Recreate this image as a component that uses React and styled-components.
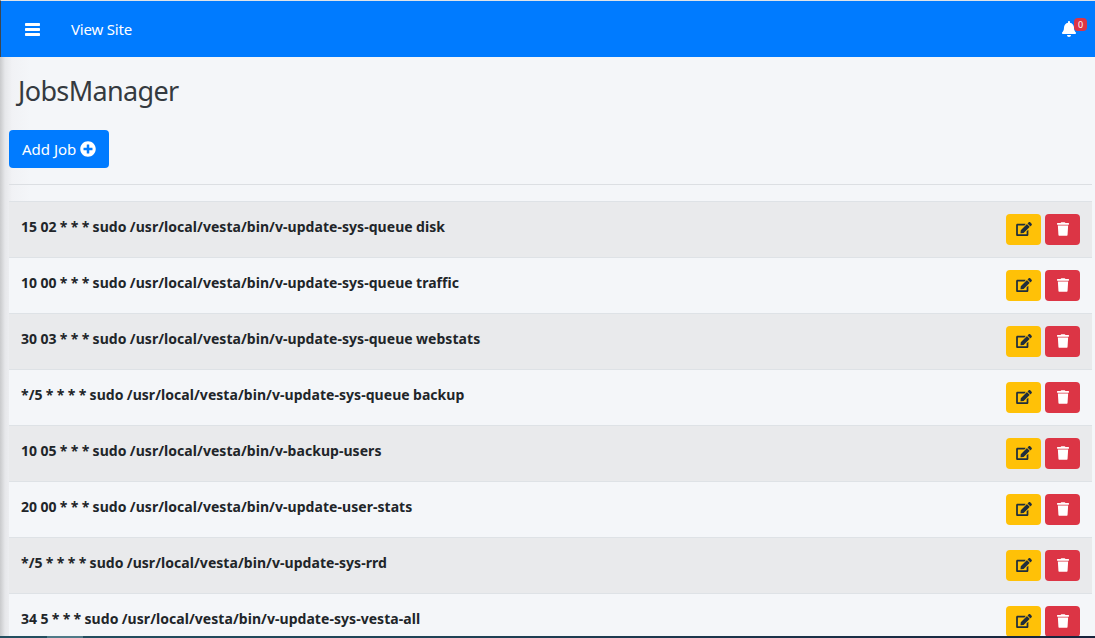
import React from "react";
import styled, { createGlobalStyle } from "styled-components";

const FONT = '"Noto Sans", "Open Sans", sans-serif';

const jobs = [
  "15 02 * * * sudo /usr/local/vesta/bin/v-update-sys-queue disk",
  "10 00 * * * sudo /usr/local/vesta/bin/v-update-sys-queue traffic",
  "30 03 * * * sudo /usr/local/vesta/bin/v-update-sys-queue webstats",
  "*/5 * * * * sudo /usr/local/vesta/bin/v-update-sys-queue backup",
  "10 05 * * * sudo /usr/local/vesta/bin/v-backup-users",
  "20 00 * * * sudo /usr/local/vesta/bin/v-update-user-stats",
  "*/5 * * * * sudo /usr/local/vesta/bin/v-update-sys-rrd",
  "34 5 * * * sudo /usr/local/vesta/bin/v-update-sys-vesta-all",
];

const GlobalStyle = createGlobalStyle`
  html, body {
    margin: 0;
    height: 100%;
    overflow: hidden;
    background: #f4f6f9;
  }
  * {
    box-sizing: border-box;
  }
`;

const Page = styled.div`
  height: 638px;
  overflow: hidden;
  font-family: ${FONT};
  color: #212529;
  display: flex;
  flex-direction: column;
  background: linear-gradient(90deg, #c9cacc 0, #e6e7ea 5px, #f1f2f5 12px, #f4f6f9 30px);
`;

const Navbar = styled.nav`
  height: 57px;
  flex: none;
  background: #007bff;
  border-top: 1px solid #dfe3e8;
  border-left: 1px solid #3c4650;
  display: flex;
  align-items: center;
  padding: 0 19px 0 24px;
  color: #fff;
`;

const MenuButton = styled.span`
  display: flex;
  width: 15px;
  margin-right: 31px;
`;

const NavLink = styled.span`
  font-size: 15px;
  letter-spacing: -0.2px;
`;

const Bell = styled.span`
  position: relative;
  display: flex;
  margin-left: auto;
`;

const Badge = styled.span`
  position: absolute;
  top: -3px;
  right: -11px;
  width: 13px;
  height: 13px;
  border-radius: 4px;
  background: #dc3545;
  font-size: 9px;
  line-height: 13px;
  text-align: center;
`;

const Content = styled.main`
  flex: 1;
  min-height: 0;
  overflow: hidden;
  padding: 0 3px 0 9px;
`;

const Title = styled.h1`
  margin: 18px 0 23px 9px;
  font-size: 27px;
  line-height: 32px;
  font-weight: 400;
  color: #343a40;
  letter-spacing: -0.65px;
`;

const AddButton = styled.button`
  display: flex;
  align-items: center;
  gap: 4px;
  height: 38px;
  width: 100px;
  padding: 0 0 0 13px;
  border: 0;
  border-radius: 4px;
  background: #007bff;
  color: #fff;
  font: 400 15px ${FONT};
  letter-spacing: 0;
`;

const Divider = styled.hr`
  margin: 16px 0;
  border: 0;
  border-top: 1px solid #dcdfe3;
`;

const Row = styled.div`
  height: 56px;
  display: flex;
  align-items: center;
  padding: 0 12px;
  border-top: 1px solid #dee2e6;
  background: ${(p) => (p.$striped ? "#e9eaec" : "#f4f6f9")};
`;

const Command = styled.span`
  font-size: 14px;
  line-height: 20px;
  font-weight: 700;
  letter-spacing: 0.05px;
  word-spacing: -0.4px;
  margin-top: -5px;
`;

const Actions = styled.div`
  display: flex;
  gap: 4px;
  margin-left: auto;
`;

const IconButton = styled.span`
  width: 35px;
  height: 31px;
  padding-bottom: 2px;
  border-radius: 4px;
  display: flex;
  align-items: center;
  justify-content: center;
  background: ${(p) => (p.$danger ? "#dc3545" : "#ffc107")};
  color: ${(p) => (p.$danger ? "#fff" : "#1f2d3d")};
`;

const Taskbar = styled.div`
  flex: none;
  height: 2px;
  display: flex;
  background: linear-gradient(90deg, #234f60 0, #1f4256 40%, #17233d 100%);
`;

const TaskbarItem = styled.span`
  width: 36px;
  margin-left: 47px;
  background: #4f7a88;
`;

const BarsIcon = () => (
  <svg width="15" height="13" viewBox="0 0 15 13" fill="currentColor">
    <rect y="0" width="15" height="3" rx="0.7" />
    <rect y="5" width="15" height="3" rx="0.7" />
    <rect y="10" width="15" height="3" rx="0.7" />
  </svg>
);

const BellIcon = () => (
  <svg width="14" height="16" viewBox="0 0 448 512" fill="currentColor">
    <path d="M224 512c35.32 0 63.97-28.65 63.97-64H160.03c0 35.35 28.65 64 63.97 64zm215.39-149.71c-19.32-20.76-55.47-51.99-55.47-154.29 0-77.7-54.48-139.9-127.94-155.16V32c0-17.67-14.32-32-31.98-32s-31.98 14.33-31.98 32v20.84C118.56 68.1 64.08 130.3 64.08 208c0 102.3-36.15 133.53-55.47 154.29-6 6.45-8.66 14.16-8.61 21.71.11 16.4 12.98 32 32.1 32h383.8c19.12 0 32-15.6 32.1-32 .05-7.55-2.61-15.27-8.61-21.71z" />
  </svg>
);

const PlusIcon = () => (
  <svg width="16" height="16" viewBox="0 0 512 512" fill="currentColor">
    <path d="M256 8C119 8 8 119 8 256s111 248 248 248 248-111 248-248S393 8 256 8zm144 276c0 6.600-5.400 12-12 12h-92v92c0 6.600-5.400 12-12 12h-56c-6.600 0-12-5.400-12-12v-92h-92c-6.600 0-12-5.400-12-12v-56c0-6.600 5.400-12 12-12h92v-92c0-6.600 5.400-12 12-12h56c6.600 0 12 5.400 12 12v92h92c6.600 0 12 5.400 12 12v56z" />
  </svg>
);

const EditIcon = () => (
  <svg width="16" height="14" viewBox="0 0 576 512" fill="currentColor">
    <path d="M402.600 83.200l90.200 90.200c3.800 3.800 3.800 10 0 13.800L274.400 405.600l-92.800 10.300c-12.400 1.400-22.900-9.100-21.500-21.500l10.300-92.800L388.800 83.200c3.800-3.800 10-3.800 13.800 0zm162-22.900l-48.800-48.800c-15.200-15.200-39.900-15.200-55.200 0l-35.400 35.400c-3.800 3.800-3.800 10 0 13.800l90.200 90.200c3.800 3.800 10 3.800 13.800 0l35.400-35.400c15.200-15.300 15.200-40 0-55.200zM384 346.200V448H64V128h229.800c3.200 0 6.200-1.300 8.500-3.500l40-40c7.600-7.600 2.200-20.500-8.500-20.500H48C21.500 64 0 85.500 0 112v352c0 26.500 21.500 48 48 48h352c26.500 0 48-21.500 48-48V306.200c0-10.700-12.900-16-20.500-8.500l-40 40c-2.200 2.300-3.500 5.300-3.500 8.500z" />
  </svg>
);

const TrashIcon = () => (
  <svg width="12" height="14" viewBox="0 0 448 512" fill="currentColor">
    <path d="M432 32H312l-9.400-18.700A24 24 0 0 0 281.100 0H166.800a23.720 23.720 0 0 0-21.400 13.300L136 32H16A16 16 0 0 0 0 48v32a16 16 0 0 0 16 16h416a16 16 0 0 0 16-16V48a16 16 0 0 0-16-16zM53.200 467a48 48 0 0 0 47.900 45h245.800a48 48 0 0 0 47.900-45L416 128H32z" />
  </svg>
);

export default function App() {
  return (
    <>
      <GlobalStyle />
      <Page>
        <Navbar>
          <MenuButton>
            <BarsIcon />
          </MenuButton>
          <NavLink>View Site</NavLink>
          <Bell>
            <BellIcon />
            <Badge>0</Badge>
          </Bell>
        </Navbar>
        <Content>
          <Title>JobsManager</Title>
          <AddButton>
            Add Job <PlusIcon />
          </AddButton>
          <Divider />
          {jobs.map((job, i) => (
            <Row key={job} $striped={i % 2 === 0}>
              <Command>{job}</Command>
              <Actions>
                <IconButton>
                  <EditIcon />
                </IconButton>
                <IconButton $danger>
                  <TrashIcon />
                </IconButton>
              </Actions>
            </Row>
          ))}
        </Content>
        <Taskbar>
          <TaskbarItem />
        </Taskbar>
      </Page>
    </>
  );
}
